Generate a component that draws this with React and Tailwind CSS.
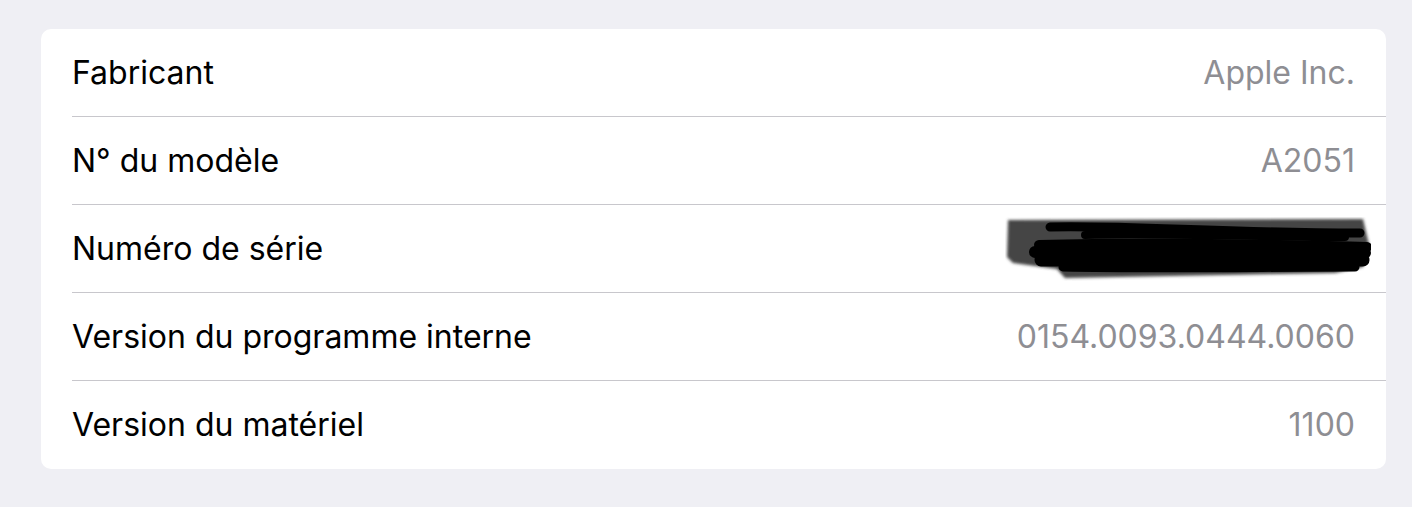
const rows = [
  { label: 'Fabricant', value: 'Apple Inc.' },
  { label: 'N° du modèle', value: 'A2051' },
  { label: 'Numéro de série', value: null },
  { label: 'Version du programme interne', value: '0154.0093.0444.0060' },
  { label: 'Version du matériel', value: '1100' },
]

// hand-drawn redaction over the serial number
const Scribble = () => (
  <svg width="366" height="64" viewBox="0 0 366 64" className="-mr-[16px]">
    <defs>
      <filter id="soft" x="-10%" y="-30%" width="120%" height="160%">
        <feGaussianBlur stdDeviation="1.6" />
      </filter>
      <filter id="soft2">
        <feGaussianBlur stdDeviation="0.7" />
      </filter>
    </defs>
    <path d="M3 3 L358 2 L364 28 L358 50 L330 56 L60 61 L52 52 L8 46 L2 40 Z" fill="#444" filter="url(#soft)" />
    <g filter="url(#soft2)" stroke="#000" strokeLinecap="round" fill="none">
      <path d="M45 10 C120 8 220 16 355 16" strokeWidth="9" />
      <path d="M80 18 C160 16 260 20 340 20" strokeWidth="8" />
      <path d="M34 28 C120 26 250 27 362 30" strokeWidth="10" />
      <path d="M30 35 C140 32 260 34 360 36" strokeWidth="12" />
      <path d="M36 43 C150 43 260 41 358 43" strokeWidth="13" />
      <path d="M58 50 C150 52 260 50 350 50" strokeWidth="9" />
    </g>
  </svg>
)

export default function App() {
  return (
    <div className="w-[1412px] h-[507px] bg-[#efeff4] pt-[29px] pl-[41px] pr-[26px]" style={{ fontFamily: 'Inter, "Liberation Sans", sans-serif' }}>
      <div className="bg-white rounded-[10px] overflow-hidden">
        {rows.map((row, i) => (
          <div key={i} className="pl-[31px]">
            <div className={`flex items-center justify-between h-[88px] pr-[31px] ${i < rows.length - 1 ? 'border-b border-[#c8c7cc]' : ''}`}>
              <span className="text-[32px] text-black">{row.label}</span>
              {row.value ? (
                <span className="text-[32px] text-[#8e8e93]">{row.value}</span>
              ) : (
                <Scribble />
              )}
            </div>
          </div>
        ))}
      </div>
    </div>
  )
}
